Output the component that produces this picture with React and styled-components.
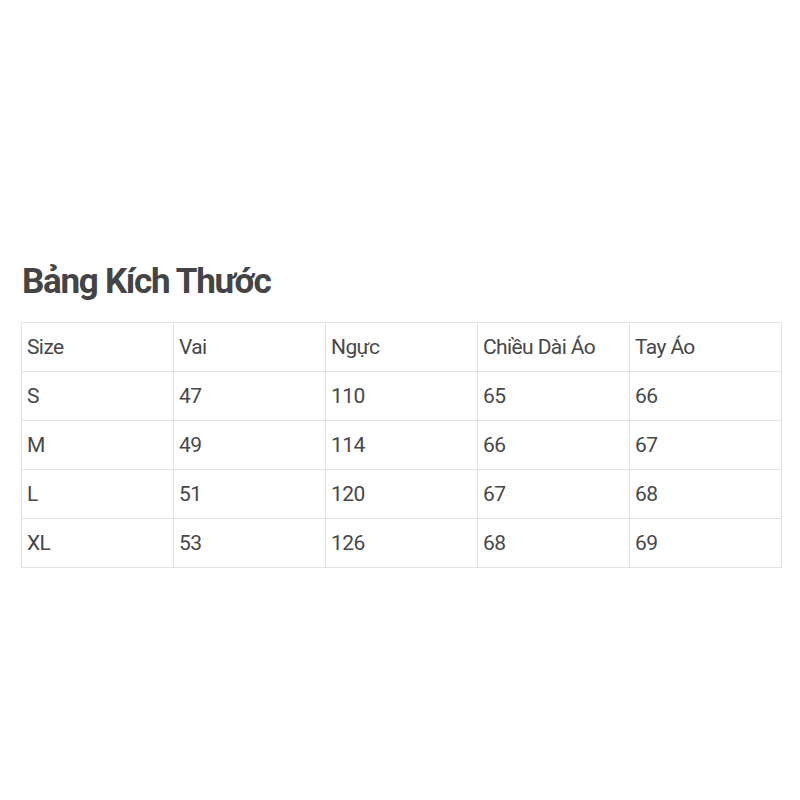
import { createGlobalStyle, styled } from 'styled-components';

const GlobalStyle = createGlobalStyle`
  html, body {
    margin: 0;
    padding: 0;
    background: #fff;
  }
  body {
    font-family: Roboto, "Liberation Sans", sans-serif;
  }
`;

const Page = styled.div`
  width: 800px;
  height: 800px;
  box-sizing: border-box;
  padding: 259px 19px 0 21px;
`;

const Title = styled.h2`
  margin: 0 0 17px 1px;
  font-family: Roboto, "Liberation Sans", sans-serif;
  font-weight: 700;
  font-size: 35px;
  line-height: 46px;
  letter-spacing: -1.3px;
  color: #444;
`;

const Table = styled.table`
  width: 761px;
  border-collapse: collapse;
  table-layout: fixed;
  td {
    border: 1px solid #e3e3e3;
    height: 48px;
    padding: 0 5px;
    font-size: 21px;
    color: #474747;
    font-weight: 400;
    letter-spacing: -0.6px;
    vertical-align: middle;
  }
`;

const headers = ['Size', 'Vai', 'Ngực', 'Chiều Dài Áo', 'Tay Áo'];
const rows = [
  ['S', '47', '110', '65', '66'],
  ['M', '49', '114', '66', '67'],
  ['L', '51', '120', '67', '68'],
  ['XL', '53', '126', '68', '69'],
];

export default function App() {
  return (
    <Page>
      <GlobalStyle />
      <Title>Bảng Kích Thước</Title>
      <Table>
        <tbody>
          <tr>
            {headers.map((h) => (
              <td key={h}>{h}</td>
            ))}
          </tr>
          {rows.map((r) => (
            <tr key={r[0]}>
              {r.map((c, i) => (
                <td key={i}>{c}</td>
              ))}
            </tr>
          ))}
        </tbody>
      </Table>
    </Page>
  );
}
